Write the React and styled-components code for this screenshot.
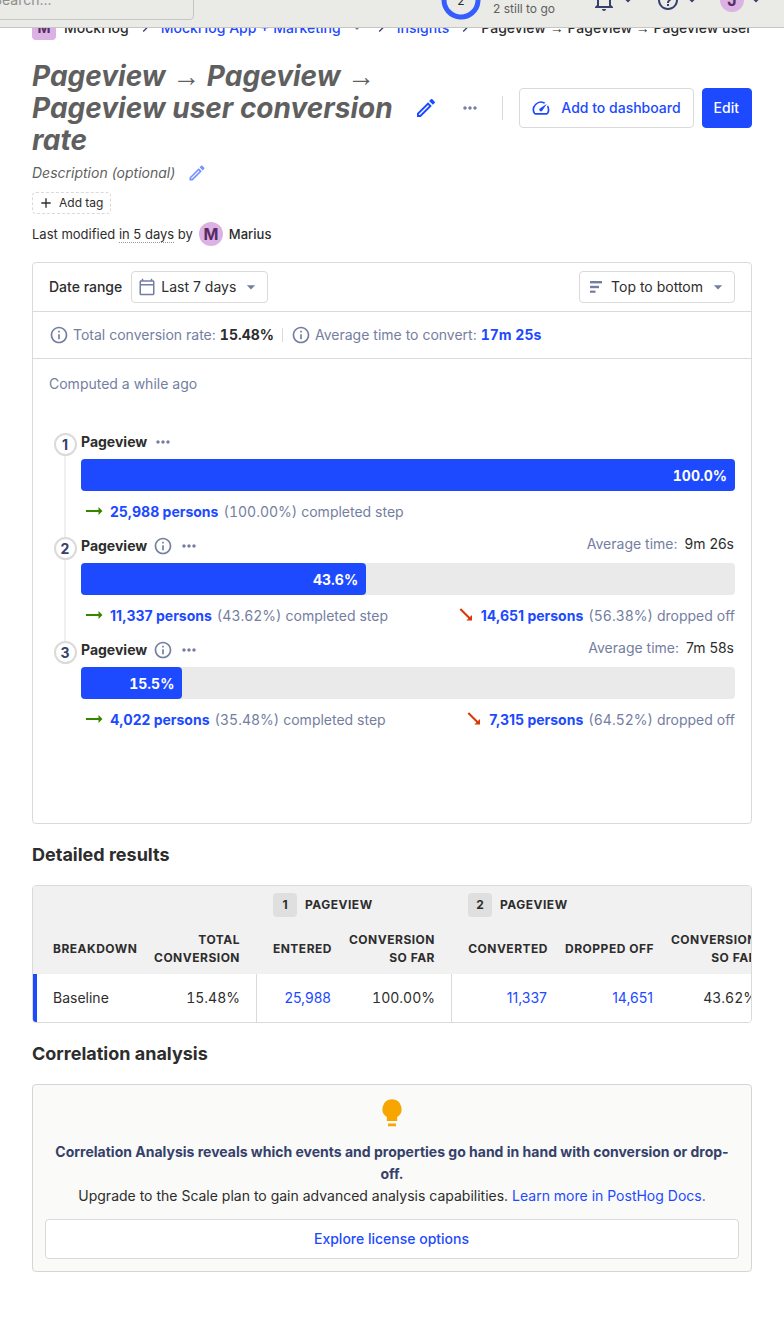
import React from 'react';
import styled, { createGlobalStyle } from 'styled-components';
import {
  MdArrowDropDown,
  MdChevronRight,
  MdHelpOutline,
  MdInfoOutline,
  MdMoreHoriz,
  MdOutlineCalendarToday,
  MdAdd,
  MdSpeed,
} from 'react-icons/md';

const color = {
  text: '#2d2d2d',
  title: '#5f5f5f',
  muted: '#747ea1',
  navy: '#35416b',
  primary: '#1d4aff',
  border: '#dadada',
  track: '#eaeaea',
  lilac: '#dcb1e3',
};

const GlobalStyle = createGlobalStyle`
  *, *::before, *::after { box-sizing: border-box; }
  body {
    margin: 0;
    background: #fff;
    color: ${color.text};
    font-family: Inter, "Liberation Sans", sans-serif;
    font-size: 14px;
    line-height: 20px;
    overflow-x: hidden;
  }
  button, input { font: inherit; color: inherit; }
  button { cursor: pointer; }
  a { color: ${color.primary}; text-decoration: none; }
  h1, h2, p, ol { margin: 0; padding: 0; }
  svg { display: block; flex: none; }
`;

/* ---- Top bar ---- */

const TopBar = styled.header`
  position: sticky;
  top: -28px;
  z-index: 2;
  display: flex;
  align-items: center;
  height: 56px;
  margin-top: -28px;
  padding-right: 18px;
  background: #eaeae6;
  border-bottom: 1px solid #c6c6c3;
  overflow: hidden;
`;

const Search = styled.input`
  width: 224px;
  height: 40px;
  margin: 0 auto 0 -30px;
  padding: 0 22px;
  border: 1px solid #c6c6c3;
  border-radius: 4px;
  background: transparent;
  &::placeholder { color: #8f8f8c; opacity: 1; }
`;

const Activation = styled.a`
  display: flex;
  align-items: center;
  gap: 12px;
  margin-right: 19px;
  color: #5f5f5f;
  font-size: 12px;
  line-height: 18px;
`;

const ActivationText = styled.span`
  padding-top: 18px;
`;

const BarButton = styled.button`
  display: flex;
  align-items: center;
  gap: 2px;
  padding: 0;
  margin-left: 18px;
  border: 0;
  background: none;
  color: ${color.navy};
`;

const Avatar = styled.span`
  display: flex;
  align-items: center;
  justify-content: center;
  flex: none;
  width: 24px;
  height: 24px;
  border-radius: ${(p) => (p.$square ? '4px' : '50%')};
  background: ${color.lilac};
  color: #572c63;
  font-weight: 700;
  font-size: ${(p) => (p.$square ? '14px' : '16px')};
`;

/* ---- Page heading ---- */

const Main = styled.main`
  padding: 0 32px 64px;
`;

const Breadcrumbs = styled.nav`
  display: flex;
  align-items: center;
  gap: 8px;
  height: 24px;
  margin-top: -12px;
  font-weight: 500;
  line-height: 24px;
  white-space: nowrap;
  overflow: hidden;
  svg { color: ${color.navy}; }
`;

const CrumbMenu = styled.a`
  display: flex;
  align-items: center;
  gap: 8px;
  svg { color: ${color.muted}; }
`;

const Arrow = styled.span`
  font-family: "Liberation Sans", sans-serif;
  line-height: 1;
`;

const TitleRow = styled.div`
  display: flex;
  align-items: center;
  gap: 8px;
  margin-top: 20px;
`;

const Title = styled.h1`
  flex: 1;
  color: ${color.title};
  font-size: 28px;
  line-height: 32px;
  font-weight: 700;
  font-style: italic;
`;

const IconButton = styled.button`
  display: flex;
  align-items: center;
  justify-content: center;
  width: ${(p) => p.$size || 36}px;
  height: ${(p) => p.$size || 36}px;
  padding: 0;
  border: 0;
  background: none;
  color: ${(p) => p.$color || color.muted};
  opacity: ${(p) => (p.$faded ? 0.6 : 1)};
`;

const Rule = styled.span`
  width: 1px;
  height: ${(p) => p.$height}px;
  margin: 0 8px 0 ${(p) => p.$before || 8}px;
  background: ${color.border};
`;

const Button = styled.button`
  display: flex;
  align-items: center;
  justify-content: center;
  gap: 10px;
  height: 40px;
  min-width: 50px;
  width: ${(p) => (p.$wide ? '100%' : 'auto')};
  padding: 0 12px 0 11px;
  border: 1px solid ${(p) => (p.$primary ? color.primary : color.border)};
  border-radius: 4px;
  background: ${(p) => (p.$primary ? color.primary : '#fff')};
  color: ${(p) => (p.$primary ? '#fff' : color.primary)};
  font-weight: 500;
  white-space: nowrap;
`;

const Description = styled.div`
  display: flex;
  align-items: center;
  gap: 8px;
  height: 34px;
  color: ${color.title};
  font-style: italic;
`;

const TagButton = styled.button`
  display: flex;
  align-items: center;
  gap: 5px;
  height: 22px;
  margin-top: 2px;
  padding: 0 7px 0 5px;
  border: 1px dashed ${color.border};
  border-radius: 4px;
  background: none;
  font-size: 12px;
`;

const Modified = styled.div`
  display: flex;
  align-items: center;
  gap: 6px;
  margin: 8px 0 16px;
  font-size: 13px;
  time { border-bottom: 1px dotted #9a9a9a; line-height: 16px; }
  strong { font-weight: 500; }
`;

/* ---- Insight card ---- */

const Card = styled.section`
  border: 1px solid ${color.border};
  border-radius: 4px;
  background: #fff;
`;

const CardRow = styled.div`
  display: flex;
  align-items: center;
  gap: ${(p) => p.$gap ?? 9}px;
  height: ${(p) => p.$height}px;
  padding: 0 16px;
  border-bottom: 1px solid ${color.border};
`;

const Label = styled.span`
  font-weight: 500;
`;

const Picker = styled.button`
  display: flex;
  align-items: center;
  gap: 5px;
  height: 32px;
  padding: 0 6px;
  margin-left: ${(p) => (p.$end ? 'auto' : 0)};
  border: 1px solid ${color.border};
  border-radius: 4px;
  background: #fff;
  svg { color: ${color.muted}; }
`;

const Muted = styled.span`
  color: ${color.muted};
`;

const Stat = styled.span`
  display: flex;
  align-items: center;
  gap: 4px;
  color: ${color.muted};
  strong { color: ${color.text}; }
  a { font-weight: 700; }
`;

const Num = styled.span`
  font-variant-numeric: tabular-nums;
`;

const CardBody = styled.div`
  padding: 15px 16px 93px;
`;

const Steps = styled.ol`
  margin-top: 36px;
  list-style: none;
`;

const Step = styled.li`
  display: flex;
  min-height: 104px;
  &:last-child { min-height: 0; }
`;

const Rail = styled.div`
  display: flex;
  flex-direction: column;
  align-items: center;
  flex: none;
  width: 32px;
  margin: 3px 0 -3px;
  &::after {
    content: '';
    flex: 1;
    width: 2px;
    background: ${(p) => (p.$last ? 'transparent' : '#efefef')};
  }
`;

const StepNumber = styled.span`
  display: flex;
  align-items: center;
  justify-content: center;
  width: 23px;
  height: 23px;
  border: 2px solid ${color.border};
  border-radius: 50%;
  color: ${color.navy};
  font-weight: 700;
`;

const StepBody = styled.div`
  flex: 1;
  min-width: 0;
`;

const StepHead = styled.div`
  display: flex;
  align-items: center;
  gap: 6px;
  height: 24px;
  svg { color: ${color.muted}; }
`;

const AverageTime = styled.span`
  display: flex;
  gap: 7px;
  margin-left: auto;
  padding-right: 1px;
  margin-bottom: 4px;
  color: ${color.muted};
  span { color: ${color.text}; }
`;

const Track = styled.div`
  height: 32px;
  margin-top: 5px;
  border-radius: 4px;
  background: ${color.track};
`;

const Fill = styled.div`
  display: flex;
  align-items: center;
  justify-content: flex-end;
  height: 100%;
  padding: 1px 8px 0 0;
  border-radius: 4px;
  background: ${color.primary};
  color: #fff;
  font-weight: 700;
  font-variant-numeric: tabular-nums;
`;

const StepFoot = styled.div`
  display: flex;
  justify-content: space-between;
  margin-top: 11px;
  padding-left: 4px;
`;

const Outcome = styled.span`
  display: flex;
  align-items: center;
  gap: 5px;
  color: ${color.muted};
  a { font-weight: 700; }
`;

const TrendIcon = styled.svg`
  color: ${(p) => (p.$down ? '#db3707' : '#388600')};
  transform: ${(p) => (p.$down ? 'rotate(45deg)' : 'none')};
`;

/* ---- Results table ---- */

const SectionTitle = styled.h2`
  margin: 18px 0 17px;
  font-size: 18px;
  line-height: 26px;
  font-weight: 700;
`;

const TableCard = styled(Card)`
  overflow-x: auto;
  scrollbar-width: none;
`;

const Table = styled.table`
  table-layout: fixed;
  width: 100%;
  min-width: 740px;
  border-collapse: separate;
  border-spacing: 0;
`;

const Col = styled.col`
  width: ${(p) => (p.$width ? `${p.$width}px` : 'auto')};
`;

const GroupHead = styled.th`
  height: 38px;
  padding: 0 17px;
  background: #f1f1f1;
  font-size: 12px;
  font-weight: 700;
  letter-spacing: 0.5px;
  text-align: left;
  text-transform: uppercase;
`;

const GroupName = styled.span`
  display: flex;
  align-items: center;
  gap: 8px;
`;

const GroupNumber = styled.span`
  display: flex;
  align-items: center;
  justify-content: center;
  width: 24px;
  height: 24px;
  border-radius: 4px;
  background: #dfdfdf;
  letter-spacing: 0;
`;

const Head = styled.th`
  height: 50px;
  padding: 0 ${(p) => (p.$end ? 16 : 8)}px 0 ${(p) => (p.$start ? 16 : 8)}px;
  background: #f1f1f1;
  font-size: 12px;
  line-height: 18px;
  font-weight: 700;
  letter-spacing: 0.5px;
  text-align: ${(p) => (p.$left ? 'left' : 'right')};
  text-transform: uppercase;
  &:first-child { padding-left: 20px; white-space: nowrap; }
`;

const Cell = styled.td`
  height: 48px;
  padding: 0 ${(p) => (p.$end ? 16 : 9)}px 0 8px;
  border-left: ${(p) => (p.$start ? `1px solid ${color.border}` : '0')};
  text-align: right;
  &:first-child {
    padding-left: 16px;
    border-left: 4px solid ${color.primary};
    text-align: left;
  }
`;

/* ---- Correlation ---- */

const Upsell = styled(Card)`
  display: flex;
  flex-direction: column;
  align-items: center;
  padding: 14px 12px 12px;
  border-color: #d5d5d3;
  background: #fafaf8;
  line-height: 22px;
  text-align: center;
  strong { color: ${color.navy}; font-weight: 700; }
`;

const UpsellText = styled.div`
  margin: 14px 0 12px;
`;

/* ---- Icons ---- */

const Pencil = ({ size }) => (
  <svg width={size} height={size} viewBox="0 0 24 24" fill="currentColor" aria-hidden="true">
    <path d="M14.06 9L15 9.94 5.92 19H5v-.92L14.06 9m3.6-6c-.25 0-.51.1-.7.29l-1.83 1.83 3.75 3.75 1.83-1.83c.39-.39.39-1.04 0-1.41l-2.34-2.34c-.2-.2-.45-.29-.71-.29m-3.6 3.19L3 17.25V21h3.75L17.81 9.94l-3.75-3.75z" />
  </svg>
);

const Bell = () => (
  <svg width="24" height="24" viewBox="0 0 24 24" fill="currentColor" aria-hidden="true">
    <path d="M10 21h4c0 1.1-.9 2-2 2s-2-.9-2-2m11-2v1H3v-1l2-2v-6c0-3.1 2-5.8 5-6.7V4c0-1.1.9-2 2-2s2 .9 2 2v.3c3 .9 5 3.6 5 6.7v6l2 2m-4-8c0-2.8-2.2-5-5-5s-5 2.2-5 5v7h10v-7z" />
  </svg>
);

const Ring = () => (
  <svg width="40" height="40" viewBox="0 0 40 40" aria-hidden="true">
    <circle cx="20" cy="20" r="17" fill="none" stroke="#345cff" strokeWidth="5" strokeDasharray="78 107" transform="rotate(-85 20 20)" />
    <text x="20" y="25" textAnchor="middle" fontSize="12" fill={color.text}>2</text>
  </svg>
);

const SortBars = () => (
  <svg width="20" height="20" viewBox="0 0 20 20" fill="currentColor" aria-hidden="true">
    <rect x="4" y="4" width="12" height="2.4" />
    <rect x="4" y="8.8" width="9" height="2.4" />
    <rect x="4" y="13.6" width="5.5" height="2.2" />
  </svg>
);

const Trend = ({ down }) => (
  <TrendIcon $down={down} width="20" height="20" viewBox="0 0 20 20" fill="currentColor" aria-hidden="true">
    <path d="M1 8h12.5V5L17.5 9l-4 4v-3H1z" />
  </TrendIcon>
);

const Bulb = () => (
  <svg width="20" height="28" viewBox="0 0 20 28" fill="#f7a501" aria-hidden="true">
    <path d="M10 .3a9.6 9.6 0 0 0-5.2 17.6V22h10.4v-4.1A9.6 9.6 0 0 0 10 .3zM6 24.6h8v2.7H6z" />
  </svg>
);

const steps = [
  { share: 100, label: '100.0%', persons: '25,988', rate: '(100.00%)' },
  { share: 43.6, label: '43.6%', persons: '11,337', rate: '(43.62%)', time: '9m 26s', dropped: '14,651', dropRate: '(56.38%)' },
  { share: 15.5, label: '15.5%', persons: '4,022', rate: '(35.48%)', time: '7m 58s', dropped: '7,315', dropRate: '(64.52%)' },
];

function FunnelStep({ step, index, last }) {
  return (
    <Step>
      <Rail $last={last}>
        <StepNumber>{index + 1}</StepNumber>
      </Rail>
      <StepBody>
        <StepHead>
          <strong>Pageview</strong>
          {step.time && <MdInfoOutline size={20} />}
          <IconButton $size={20} aria-label="Step options"><MdMoreHoriz size={20} /></IconButton>
          {step.time && <AverageTime>Average time: <span>{step.time}</span></AverageTime>}
        </StepHead>
        <Track>
          <Fill style={{ width: `${step.share}%` }}>{step.label}</Fill>
        </Track>
        <StepFoot>
          <Outcome>
            <Trend />
            <a href="#persons">{step.persons} persons</a>
            <span><Num>{step.rate}</Num> completed step</span>
          </Outcome>
          {step.dropped && (
            <Outcome>
              <Trend down />
              <a href="#dropped">{step.dropped} persons</a>
              <span><Num>{step.dropRate}</Num> dropped off</span>
            </Outcome>
          )}
        </StepFoot>
      </StepBody>
    </Step>
  );
}

export default function App() {
  return (
    <>
      <GlobalStyle />
      <TopBar>
        <Search type="search" placeholder="Search..." aria-label="Search" />
        <Activation href="#activation">
          <Ring />
          <ActivationText>2 still to go</ActivationText>
        </Activation>
        <BarButton aria-label="Notifications"><Bell /><MdArrowDropDown size={20} /></BarButton>
        <BarButton aria-label="Help"><MdHelpOutline size={24} /><MdArrowDropDown size={20} /></BarButton>
        <BarButton aria-label="Account"><Avatar>J</Avatar><MdArrowDropDown size={20} /></BarButton>
      </TopBar>
      <Main>
        <Breadcrumbs aria-label="Breadcrumb">
          <Avatar $square>M</Avatar>
          <span>MockHog</span>
          <MdChevronRight size={16} />
          <CrumbMenu href="#project">MockHog App + Marketing <MdArrowDropDown size={16} /></CrumbMenu>
          <MdChevronRight size={16} />
          <a href="#insights">Insights</a>
          <MdChevronRight size={16} />
          <span>Pageview <Arrow>→</Arrow> Pageview <Arrow>→</Arrow> Pageview user</span>
        </Breadcrumbs>

        <TitleRow>
          <Title>Pageview <Arrow>→</Arrow> Pageview <Arrow>→</Arrow> Pageview user conversion rate</Title>
          <IconButton $color={color.primary} aria-label="Edit name"><Pencil size={24} /></IconButton>
          <IconButton aria-label="More"><MdMoreHoriz size={20} /></IconButton>
          <Rule $height={24} $before={6} />
          <Button><MdSpeed size={20} />Add to dashboard</Button>
          <Button $primary>Edit</Button>
        </TitleRow>
        <Description>
          Description (optional)
          <IconButton $size={28} $color={color.primary} $faded aria-label="Edit description"><Pencil size={20} /></IconButton>
        </Description>
        <TagButton><MdAdd size={16} />Add tag</TagButton>
        <Modified>
          <span>Last modified <time>in 5 days</time> by</span>
          <Avatar>M</Avatar>
          <strong>Marius</strong>
        </Modified>

        <Card>
          <CardRow $height={49}>
            <Label id="range-label">Date range</Label>
            <Picker aria-describedby="range-label"><MdOutlineCalendarToday size={18} />Last 7 days<MdArrowDropDown size={20} /></Picker>
            <Picker $end><SortBars />Top to bottom<MdArrowDropDown size={20} /></Picker>
          </CardRow>
          <CardRow $height={47} $gap={0}>
            <Stat><MdInfoOutline size={20} />Total conversion rate: <strong><Num>15.48%</Num></strong></Stat>
            <Rule $height={14} />
            <Stat><MdInfoOutline size={20} />Average time to convert: <a href="#time"><Num>17m 25s</Num></a></Stat>
          </CardRow>
          <CardBody>
            <Muted>Computed a while ago</Muted>
            <Steps>
              {steps.map((step, i) => (
                <FunnelStep key={step.label} step={step} index={i} last={i === steps.length - 1} />
              ))}
            </Steps>
          </CardBody>
        </Card>

        <SectionTitle>Detailed results</SectionTitle>
        <TableCard>
          <Table>
            <colgroup>
              <Col $width={113} /><Col $width={110} /><Col $width={84} /><Col $width={111} />
              <Col $width={105} /><Col $width={106} /><Col />
            </colgroup>
            <thead>
              <tr>
                <GroupHead colSpan={2} />
                <GroupHead colSpan={2}><GroupName><GroupNumber>1</GroupNumber>Pageview</GroupName></GroupHead>
                <GroupHead colSpan={3}><GroupName><GroupNumber>2</GroupNumber>Pageview</GroupName></GroupHead>
              </tr>
              <tr>
                <Head $left>Breakdown</Head>
                <Head $end>Total conversion</Head>
                <Head $start>Entered</Head>
                <Head $end>Conversion so far</Head>
                <Head $start>Converted</Head>
                <Head>Dropped off</Head>
                <Head $end>Conversion so far</Head>
              </tr>
            </thead>
            <tbody>
              <tr>
                <Cell>Baseline</Cell>
                <Cell $end><Num>15.48%</Num></Cell>
                <Cell $start><a href="#entered">25,988</a></Cell>
                <Cell $end><Num>100.00%</Num></Cell>
                <Cell $start><a href="#converted">11,337</a></Cell>
                <Cell><a href="#dropped-off">14,651</a></Cell>
                <Cell $end><Num>43.62%</Num></Cell>
              </tr>
            </tbody>
          </Table>
        </TableCard>

        <SectionTitle>Correlation analysis</SectionTitle>
        <Upsell>
          <Bulb />
          <UpsellText>
            <strong>Correlation Analysis reveals which events and properties go hand in hand with conversion or drop-off.</strong>
            <p>Upgrade to the Scale plan to gain advanced analysis capabilities. <a href="#docs">Learn more in PostHog Docs.</a></p>
          </UpsellText>
          <Button $wide>Explore license options</Button>
        </Upsell>
      </Main>
    </>
  );
}
